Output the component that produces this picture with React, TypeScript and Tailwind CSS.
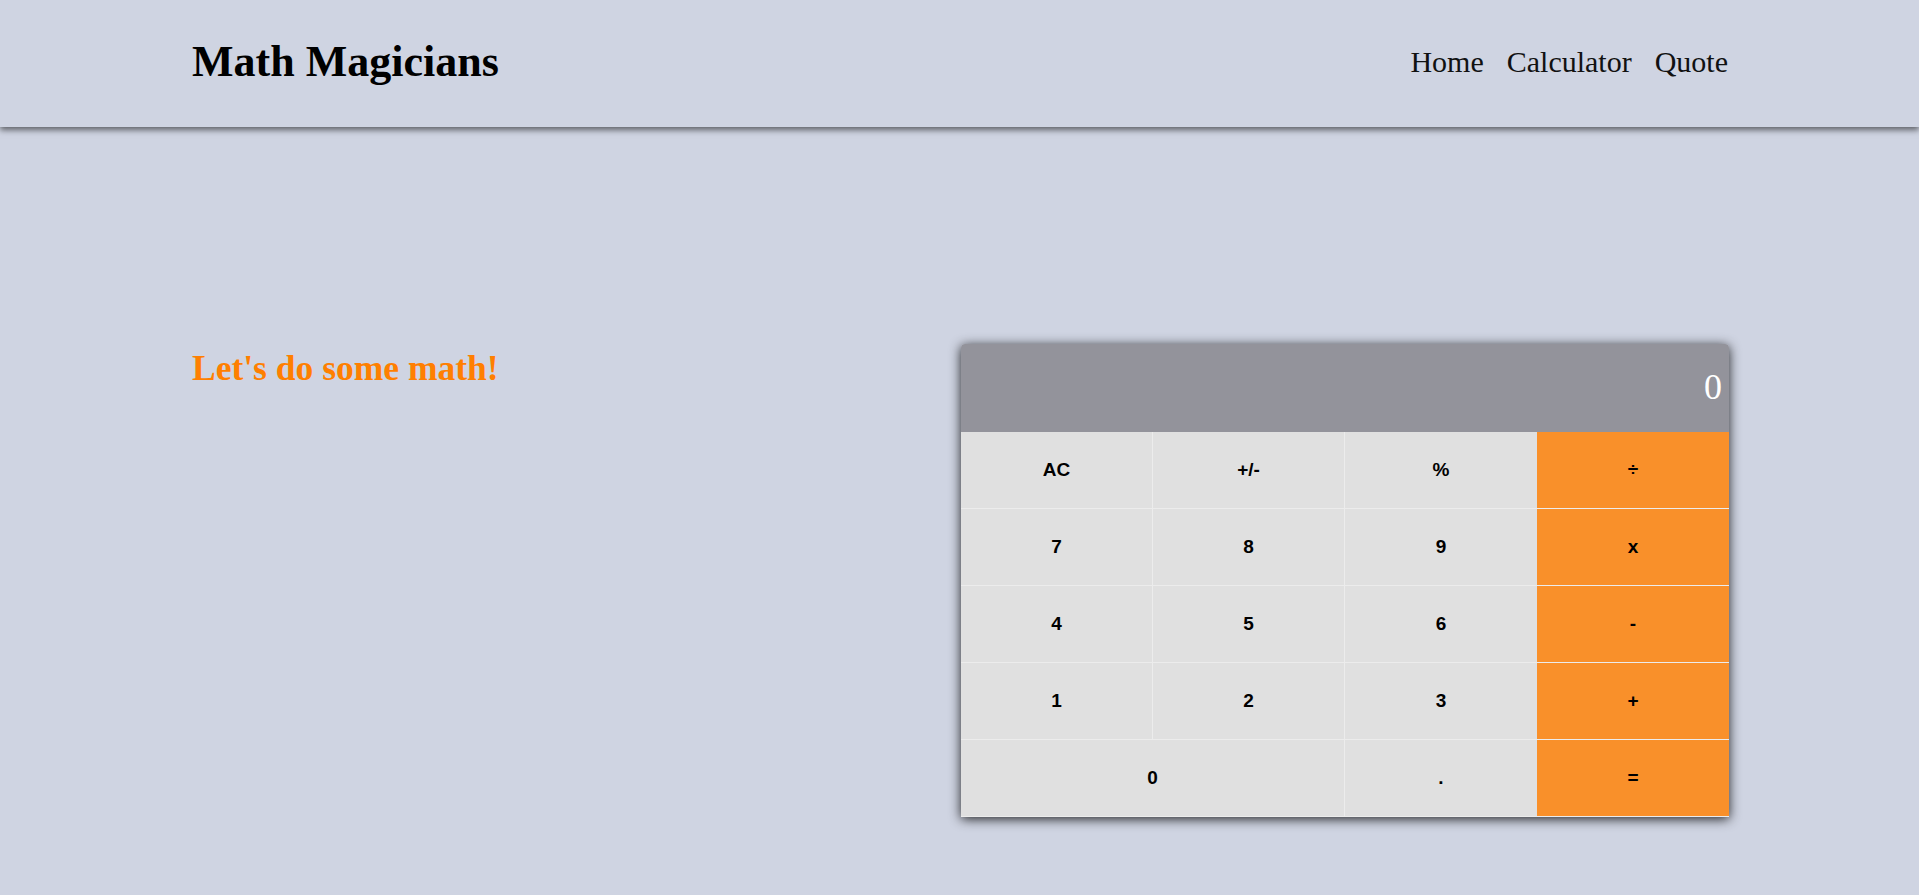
export default function App() {
  const serif = { fontFamily: '"Liberation Serif", "Times New Roman", serif' };

  return (
    <div className="min-h-[895px] bg-[#cfd4e2]" style={serif}>

      {/* Header */}

      <header className="relative z-10 h-[127px] bg-[#cfd4e2] shadow-[0_3px_6px_rgba(0,0,0,0.55)]">
        <div className="flex h-full items-center justify-between pb-[3px] pl-[192px] pr-[191px]">
          <h1 className="text-[44px] font-bold text-black">Math Magicians</h1>
          <nav className="flex gap-[23px] pb-[2px] text-[30px] text-[#111]">
            <a href="#">Home</a>
            <a href="#">Calculator</a>
            <a href="#">Quote</a>
          </nav>
        </div>
      </header>

      {/* Main */}

      <main className="flex items-start pl-[192px] pr-[190px] pt-[217px]">
        <div className="flex-1">
          <h2 className="mt-[4px] text-[35.5px] font-bold leading-[1.15] text-[#ff7f00]">Let's do some math!</h2>
        </div>
        <div className="w-[768px]">
          <Calculator />
        </div>
      </main>
    </div>
  );
}

type Key = { label: string; orange?: boolean; wide?: boolean; edge?: boolean };

const keys: Key[] = [
  { label: "AC" }, { label: "+/-" }, { label: "%", edge: true }, { label: "÷", orange: true },
  { label: "7" }, { label: "8" }, { label: "9", edge: true }, { label: "x", orange: true },
  { label: "4" }, { label: "5" }, { label: "6", edge: true }, { label: "-", orange: true },
  { label: "1" }, { label: "2" }, { label: "3", edge: true }, { label: "+", orange: true },
  { label: "0", wide: true }, { label: ".", edge: true }, { label: "=", orange: true },
];

function Calculator() {
  return (
    <div className="overflow-hidden rounded-t-[4px] shadow-[0_2px_12px_rgba(0,0,0,0.85)]">
      <div
        className="flex h-[88px] items-center justify-end bg-[#93939b] pr-[7px] text-[36px] leading-[1.15] text-white"
        style={{ fontFamily: '"Liberation Serif", "Times New Roman", serif' }}
      >
        0
      </div>
      <div
        className="grid grid-cols-4"
        style={{ fontFamily: '"Liberation Sans", Arial, sans-serif' }}
      >
        {keys.map((k) => (
          <button
            key={k.label}
            className={
              "flex h-[77px] items-center justify-center border-b border-[#ececec] text-[19px] font-bold text-black " +
              (k.orange ? "bg-[#f9902a] " : "bg-[#e0e0e0] ") +
              (k.wide ? "col-span-2 " : "") +
              (!k.orange && !k.edge ? "border-r" : "")
            }
          >
            {k.label}
          </button>
        ))}
      </div>
    </div>
  );
}
